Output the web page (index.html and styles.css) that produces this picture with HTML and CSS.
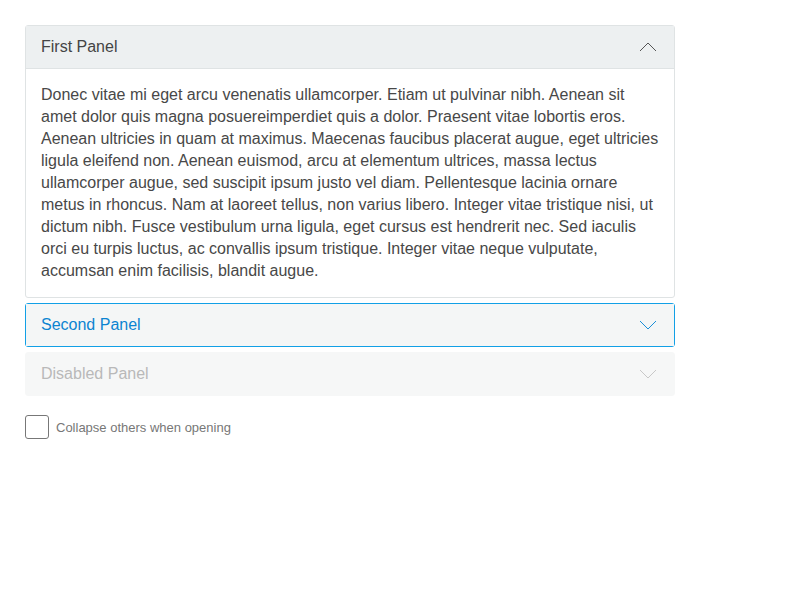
FILE: index.html
```html
<!DOCTYPE html>
<html>
<head>
<meta charset="utf-8">
<link rel="stylesheet" href="styles.css">
</head>
<body>
<div class="wrap">
  <div class="accordion">
    <div class="panel open">
      <div class="head">
        <span>First Panel</span>
        <svg class="chev" width="18" height="10" viewBox="0 0 18 10"><path d="M1 9 L9 1 L17 9" fill="none" stroke="#555" stroke-width="1"/></svg>
      </div>
      <div class="body">Donec vitae mi eget arcu venenatis ullamcorper. Etiam ut pulvinar nibh. Aenean sit amet dolor quis magna posuereimperdiet quis a dolor. Praesent vitae lobortis eros. Aenean ultricies in quam at maximus. Maecenas faucibus placerat augue, eget ultricies ligula eleifend non. Aenean euismod, arcu at elementum ultrices, massa lectus ullamcorper augue, sed suscipit ipsum justo vel diam. Pellentesque lacinia ornare metus in rhoncus. Nam at laoreet tellus, non varius libero. Integer vitae tristique nisi, ut dictum nibh. Fusce vestibulum urna ligula, eget cursus est hendrerit nec. Sed iaculis orci eu turpis luctus, ac convallis ipsum tristique. Integer vitae neque vulputate, accumsan enim facilisis, blandit augue.</div>
    </div>
    <div class="panel focused">
      <div class="head">
        <span>Second Panel</span>
        <svg class="chev" width="18" height="10" viewBox="0 0 18 10"><path d="M1 1 L9 9 L17 1" fill="none" stroke="#1a8fd8" stroke-width="1"/></svg>
      </div>
    </div>
    <div class="panel disabled">
      <div class="head">
        <span>Disabled Panel</span>
        <svg class="chev" width="18" height="10" viewBox="0 0 18 10"><path d="M1 1 L9 9 L17 1" fill="none" stroke="#c8c8c8" stroke-width="1"/></svg>
      </div>
    </div>
  </div>
  <label class="check">
    <span class="box"></span>
    <span class="lbl">Collapse others when opening</span>
  </label>
</div>
</body>
</html>
```
FILE: styles.css
```css
html, body {
  margin: 0;
  padding: 0;
  background: #fff;
}
body {
  font-family: "Liberation Sans", Arial, sans-serif;
}
.wrap {
  padding: 25px;
  width: 650px;
}
.accordion {
  display: flex;
  flex-direction: column;
}
.panel {
  border: 1px solid #dfe3e4;
  border-radius: 3px;
  background: #fff;
}
.panel + .panel {
  margin-top: 5px;
}
.panel.disabled {
  margin-top: 5px;
}
.head {
  display: flex;
  align-items: center;
  justify-content: space-between;
  padding: 0 17px 0 15px;
  height: 42px;
  font-size: 16px;
  color: #444;
  background: #edf0f1;
}
.open .head {
  border-bottom: 1px solid #dfe3e4;
}
.chev {
  display: block;
}
.body {
  padding: 15px 15px 15px 15px;
  font-size: 16px;
  line-height: 22px;
  color: #484848;
}
.focused {
  border-color: #12a0e6;
}
.focused .head {
  background: #f4f6f6;
  color: #0b84d1;
}
.disabled {
  border-color: #f6f7f7;
}
.disabled .head {
  background: #f6f7f7;
  color: #b9b9b9;
}
.check {
  display: flex;
  align-items: center;
  margin-top: 19px;
}
.box {
  width: 22px;
  height: 22px;
  border: 1px solid #777;
  border-radius: 3px;
  box-sizing: content-box;
}
.lbl {
  margin-left: 7px;
  font-size: 13px;
  color: #777;
}
```
